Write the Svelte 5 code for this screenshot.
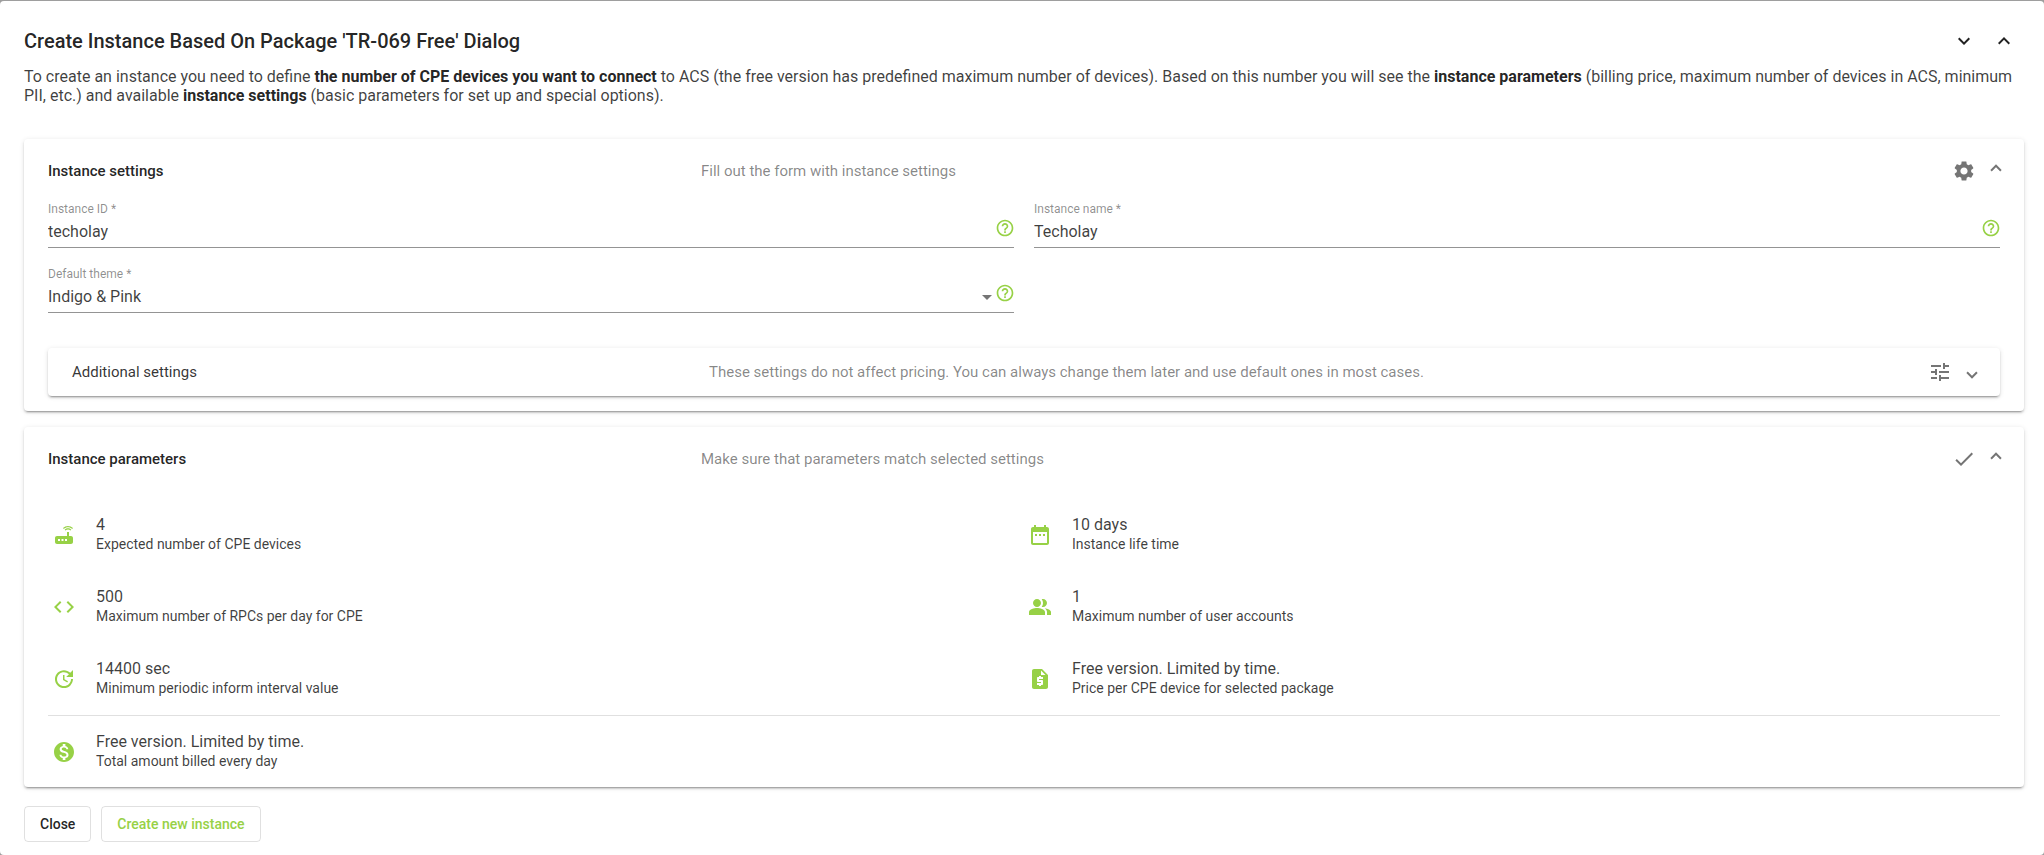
<script lang="ts">
    let instanceId = "techolay";
    let instanceName = "Techolay";
    let theme = "Indigo & Pink";

    const icons = {
        router: "M20.2 5.9l.8-.8C19.6 3.7 17.8 3 16 3s-3.6.7-5 2.1l.8.8C13 4.8 14.5 4.2 16 4.2s3 .6 4.2 1.7zm-.9.8c-.9-.9-2.1-1.4-3.3-1.4s-2.4.5-3.3 1.4l.8.8c.7-.7 1.6-1 2.5-1 .9 0 1.8.3 2.5 1l.8-.8zM19 13h-2V9h-2v4H5c-1.1 0-2 .9-2 2v4c0 1.1.9 2 2 2h14c1.1 0 2-.9 2-2v-4c0-1.1-.9-2-2-2zM8 18H6v-2h2v2zm3.5 0h-2v-2h2v2zm3.5 0h-2v-2h2v2z",
        dateRange: "M9 11H7v2h2v-2zm4 0h-2v2h2v-2zm4 0h-2v2h2v-2zm2-7h-1V2h-2v2H8V2H6v2H5c-1.11 0-1.99.9-1.99 2L3 20c0 1.1.89 2 2 2h14c1.1 0 2-.9 2-2V6c0-1.1-.9-2-2-2zm0 16H5V9h14v11z",
        code: "M9.4 16.6L4.8 12l4.6-4.6L8 6l-6 6 6 6 1.4-1.4zm5.2 0l4.6-4.6-4.6-4.6L16 6l6 6-6 6-1.4-1.4z",
        people: "M16.67 13.13C18.04 14.06 19 15.32 19 17v3h4v-3c0-2.18-3.57-3.47-6.33-3.87zM15 12c2.21 0 4-1.79 4-4s-1.79-4-4-4c-.47 0-.91.1-1.33.24C14.5 5.27 15 6.58 15 8s-.5 2.73-1.33 3.76c.42.14.86.24 1.33.24zM9 12c2.21 0 4-1.79 4-4s-1.79-4-4-4-4 1.79-4 4 1.79 4 4 4zm0 1c-2.67 0-8 1.34-8 4v3h16v-3c0-2.66-5.33-4-8-4z",
        update: "M21 10.12h-6.78l2.74-2.82c-2.73-2.7-7.15-2.8-9.88-.1-2.73 2.71-2.73 7.08 0 9.79s7.15 2.71 9.88 0C18.32 15.65 19 14.08 19 12.1h2c0 1.98-.88 4.55-2.64 6.29-3.51 3.48-9.21 3.48-12.72 0-3.5-3.47-3.53-9.11-.02-12.58s9.14-3.47 12.65 0L21 3v7.12zM12.5 8v4.25l3.5 2.08-.72 1.21L11 13V8h1.5z",
        quote: "M14 2H6c-1.1 0-1.99.9-1.99 2L4 20c0 1.1.89 2 1.99 2H18c1.1 0 2-.9 2-2V8l-6-6zm1 10h-4v1h3c.55 0 1 .45 1 1v3c0 .55-.45 1-1 1h-1v1h-2v-1H9v-2h4v-1h-3c-.55 0-1-.45-1-1v-3c0-.55.45-1 1-1h1V9h2v1h2v2zm-2-4V3.5L17.5 8H13z",
        money: "M12 2C6.48 2 2 6.48 2 12s4.48 10 10 10 10-4.48 10-10S17.52 2 12 2zm1.41 16.09V20h-2.67v-1.93c-1.71-.36-3.16-1.46-3.27-3.4h1.96c.1 1.05.82 1.87 2.65 1.87 1.96 0 2.4-.98 2.4-1.59 0-.83-.44-1.61-2.67-2.14-2.48-.6-4.18-1.62-4.18-3.67 0-1.72 1.39-2.84 3.11-3.21V4h2.67v1.95c1.86.45 2.79 1.86 2.85 3.39H14.3c-.05-1.11-.64-1.87-2.22-1.87-1.5 0-2.4.68-2.4 1.64 0 .84.65 1.39 2.67 1.91s4.18 1.39 4.18 3.91c-.01 1.83-1.38 2.83-3.12 3.16z",
        help: "M11 18h2v-2h-2v2zm1-16C6.48 2 2 6.48 2 12s4.48 10 10 10 10-4.48 10-10S17.52 2 12 2zm0 18c-4.41 0-8-3.59-8-8s3.59-8 8-8 8 3.59 8 8-3.59 8-8 8zm0-14c-2.21 0-4 1.79-4 4h2c0-1.1.9-2 2-2s2 .9 2 2c0 2-3 1.75-3 5h2c0-2.25 3-2.5 3-5 0-2.21-1.79-4-4-4z",
        settings: "M19.14 12.94c.04-.3.06-.61.06-.94 0-.32-.02-.64-.07-.94l2.03-1.58c.18-.14.23-.41.12-.61l-1.92-3.32c-.12-.22-.37-.29-.59-.22l-2.39.96c-.5-.38-1.03-.7-1.62-.94l-.36-2.54c-.04-.24-.24-.41-.48-.41h-3.84c-.24 0-.43.17-.47.41l-.36 2.54c-.59.24-1.13.57-1.62.94l-2.39-.96c-.22-.08-.47 0-.59.22L2.74 8.87c-.12.21-.08.47.12.61l2.03 1.58c-.05.3-.09.63-.09.94s.02.64.07.94l-2.03 1.58c-.18.14-.23.41-.12.61l1.92 3.32c.12.22.37.29.59.22l2.39-.96c.5.38 1.03.7 1.62.94l.36 2.54c.05.24.24.41.48.41h3.84c.24 0 .44-.17.47-.41l.36-2.54c.59-.24 1.13-.56 1.62-.94l2.39.96c.22.08.47 0 .59-.22l1.92-3.32c.12-.22.07-.47-.12-.61l-2.01-1.58zM12 15.6c-1.98 0-3.6-1.62-3.6-3.6s1.62-3.6 3.6-3.6 3.6 1.62 3.6 3.6-1.62 3.6-3.6 3.6z",
        tune: "M3 17v2h6v-2H3zM3 5v2h10V5H3zm10 16v-2h8v-2h-8v-2h-2v6h2zM7 9v2H3v2h4v2h2V9H7zm14 4v-2H11v2h10zm-6-4h2V7h4V5h-4V3h-2v6z",
        done: "M9 16.2L4.8 12l-1.4 1.4L9 19 21 7l-1.4-1.4L9 16.2z",
        expandMore: "M16.59 8.59L12 13.17 7.41 8.59 6 10l6 6 6-6z",
        expandLess: "M12 8l-6 6 1.41 1.41L12 10.83l4.59 4.58L18 14z",
    };

    const parameters = [
        { icon: icons.router, value: "4", label: "Expected number of CPE devices" },
        { icon: icons.dateRange, value: "10 days", label: "Instance life time" },
        { icon: icons.code, value: "500", label: "Maximum number of RPCs per day for CPE" },
        { icon: icons.people, value: "1", label: "Maximum number of user accounts" },
        { icon: icons.update, value: "14400 sec", label: "Minimum periodic inform interval value" },
        { icon: icons.quote, value: "Free version. Limited by time.", label: "Price per CPE device for selected package" },
    ];
    const total = { icon: icons.money, value: "Free version. Limited by time.", label: "Total amount billed every day" };
</script>

{#snippet icon(path: string)}
    <svg class="icon" viewBox="0 0 24 24" aria-hidden="true"><path d={path} /></svg>
{/snippet}

{#snippet parameter(item: { icon: string; value: string; label: string })}
    <div class="parameter">
        <span class="parameter-icon">{@render icon(item.icon)}</span>
        <div class="parameter-text">
            <div class="parameter-value">{item.value}</div>
            <div class="parameter-label">{item.label}</div>
        </div>
    </div>
{/snippet}

<div class="backdrop">
    <main class="dialog">
        <header class="dialog-header">
            <h1>Create Instance Based On Package 'TR-069 Free' Dialog</h1>
            <div class="dialog-actions">
                <button class="icon-button" aria-label="Expand all">{@render icon(icons.expandMore)}</button>
                <button class="icon-button" aria-label="Collapse all">{@render icon(icons.expandLess)}</button>
            </div>
        </header>

        <p class="intro">
            To create an instance you need to define <b>the number of CPE devices you want to connect</b> to ACS (the free version has predefined maximum number of devices). Based on this number you will see the <b>instance parameters</b> (billing price, maximum number of devices in ACS, minimum PII, etc.) and available <b>instance settings</b> (basic parameters for set up and special options).
        </p>

        <section class="panel">
            <div class="panel-header">
                <h2>Instance settings</h2>
                <span class="description">Fill out the form with instance settings</span>
                {@render icon(icons.settings)}
                <span class="indicator up"></span>
            </div>
            <div class="fields">
                <label class="field">
                    <span class="field-label">Instance ID *</span>
                    <span class="field-row">
                        <input bind:value={instanceId} />
                        <span class="help">{@render icon(icons.help)}</span>
                    </span>
                </label>
                <label class="field">
                    <span class="field-label">Instance name *</span>
                    <span class="field-row">
                        <input bind:value={instanceName} />
                        <span class="help">{@render icon(icons.help)}</span>
                    </span>
                </label>
                <div class="field">
                    <span class="field-label">Default theme *</span>
                    <span class="field-row">
                        <span class="select">{theme}</span>
                        <span class="arrow"></span>
                        <span class="help">{@render icon(icons.help)}</span>
                    </span>
                </div>
            </div>
            <div class="panel nested">
                <div class="panel-header">
                    <h3>Additional settings</h3>
                    <span class="description">These settings do not affect pricing. You can always change them later and use default ones in most cases.</span>
                    {@render icon(icons.tune)}
                    <span class="indicator"></span>
                </div>
            </div>
        </section>

        <section class="panel">
            <div class="panel-header">
                <h2>Instance parameters</h2>
                <span class="description">Make sure that parameters match selected settings</span>
                {@render icon(icons.done)}
                <span class="indicator up"></span>
            </div>
            <div class="parameters">
                {#each parameters as item}
                    {@render parameter(item)}
                {/each}
            </div>
            <div class="total">
                {@render parameter(total)}
            </div>
        </section>

        <footer>
            <button class="button">Close</button>
            <button class="button primary">Create new instance</button>
        </footer>
    </main>
</div>

<style>
    :global(body) {
        background-color: #9e9e9e;
    }

    .backdrop {
        padding-top: 1px;
        background-color: #9e9e9e;
        font-family: Roboto, "Liberation Sans", sans-serif;
        font-size: 16px;
        font-weight: 400;
        color: rgba(0, 0, 0, 0.76);
    }

    .dialog {
        box-sizing: border-box;
        height: 854px;
        padding: 20px 20px 0 24px;
        border-radius: 4px;
        background-color: #fff;
    }

    h1, h2, h3, p {
        margin: 0;
    }

    .icon {
        display: block;
        flex: none;
        width: 24px;
        height: 24px;
        fill: currentColor;
    }

    .dialog-header {
        display: flex;
        align-items: center;
        justify-content: space-between;
        height: 40px;
    }

    h1 {
        font-size: 20px;
        font-weight: 500;
        line-height: 32px;
        color: rgba(0, 0, 0, 0.87);
    }

    .dialog-actions {
        display: flex;
    }

    .icon-button {
        width: 40px;
        height: 40px;
        padding: 8px;
        border: none;
        background: none;
        color: rgba(0, 0, 0, 0.87);
    }

    .intro {
        padding: 6px 0 34px;
        line-height: 19px;
    }

    .intro b {
        font-weight: 700;
        color: rgba(0, 0, 0, 0.87);
    }

    .panel {
        margin: 0 0 16px;
        border-radius: 4px;
        background-color: #fff;
        box-shadow: 0 3px 1px -2px rgba(0, 0, 0, 0.2), 0 2px 2px 0 rgba(0, 0, 0, 0.14), 0 1px 5px 0 rgba(0, 0, 0, 0.12);
        overflow: hidden;
    }

    .panel-header {
        display: flex;
        align-items: center;
        height: 64px;
        padding: 0 24px;
        font-size: 15px;
        color: rgba(0, 0, 0, 0.54);
    }

    h2, h3 {
        flex: 0 0 653px;
        font-size: 15px;
        font-weight: 500;
        color: rgba(0, 0, 0, 0.87);
    }

    h3 {
        flex-basis: 637px;
        font-weight: 400;
        color: rgba(0, 0, 0, 0.8);
    }

    .description {
        flex: 1;
        color: rgba(0, 0, 0, 0.48);
    }

    .indicator {
        width: 6px;
        height: 6px;
        margin: 1px 0 0 16px;
        border: solid currentColor;
        border-width: 0 2px 2px 0;
        transform: rotate(45deg);
    }

    .indicator.up {
        margin: 0 0 2px 16px;
        transform: rotate(225deg);
    }

    .fields {
        display: grid;
        grid-template-columns: 1fr 1fr;
        column-gap: 20px;
        padding: 0 24px;
    }

    .field {
        height: 65px;
    }

    .field-label {
        display: block;
        height: 14px;
        line-height: 13px;
        font-size: 12px;
        color: rgba(0, 0, 0, 0.45);
    }

    .field-row {
        display: flex;
        align-items: center;
        height: 30px;
        border-bottom: 1px solid rgba(0, 0, 0, 0.42);
    }

    input, .select {
        flex: 1;
        padding: 0 0 1px;
        border: none;
        outline: none;
        background: none;
        font: inherit;
        color: inherit;
    }

    .arrow {
        margin-right: 3px;
        border: 5px solid transparent;
        border-top-color: rgba(0, 0, 0, 0.54);
        border-bottom: none;
    }

    .help {
        margin: 0 -1px 8px 0;
        color: #97d146;
    }

    .help .icon, .help :global(.icon) {
        width: 20px;
        height: 20px;
    }

    .nested {
        margin: 15px 24px 15px;
    }

    .nested .panel-header {
        height: 48px;
    }

    .parameters {
        display: grid;
        grid-template-columns: 1fr 1fr;
        padding: 8px 24px 0;
    }

    .parameter {
        display: flex;
        align-items: center;
        gap: 20px;
        height: 72px;
        padding-left: 4px;
    }

    .parameter-icon {
        color: #97d146;
    }

    .parameter-text {
        padding-bottom: 2px;
    }

    .parameter-value {
        line-height: 20px;
    }

    .parameter-label {
        line-height: 19px;
        font-size: 14px;
    }

    .total {
        height: 71px;
        margin: 0 24px;
        border-top: 1px solid rgba(0, 0, 0, 0.12);
    }

    footer {
        display: flex;
        gap: 10px;
        padding-top: 3px;
    }

    .button {
        height: 36px;
        padding: 0 15px;
        border: 1px solid rgba(0, 0, 0, 0.12);
        border-radius: 4px;
        background: none;
        font: 500 14px Roboto, "Liberation Sans", sans-serif;
        color: rgba(0, 0, 0, 0.87);
    }

    .primary {
        color: #97d146;
    }
</style>
